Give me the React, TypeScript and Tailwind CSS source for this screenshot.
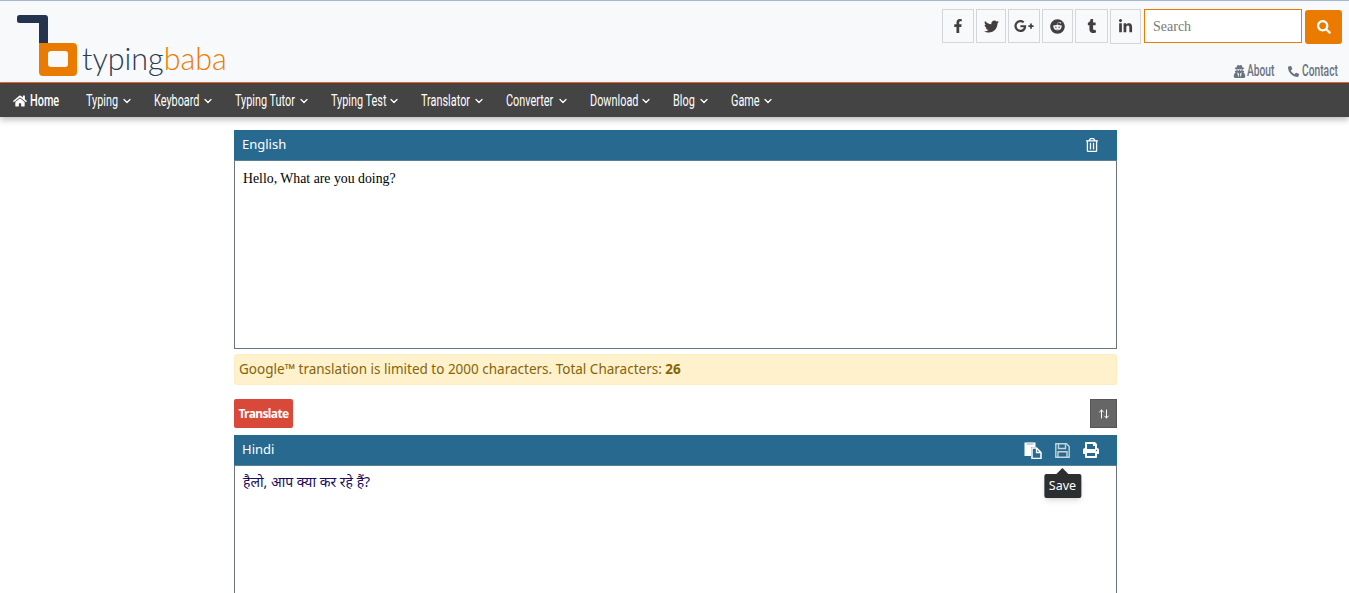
import { ArrowUpDown, ChevronDown } from 'lucide-react';
import {
  FaFacebookF,
  FaTwitter,
  FaGooglePlusG,
  FaReddit,
  FaTumblr,
  FaLinkedinIn,
  FaSearch,
  FaHome,
  FaUserSecret,
  FaPhone,
  FaRegTrashAlt,
  FaPrint,
} from 'react-icons/fa';

const socials = [
  { id: 'fb', icon: <FaFacebookF size={14} />, w: 'w-[32px]' },
  { id: 'tw', icon: <FaTwitter size={15} />, w: 'w-[30px]' },
  { id: 'gp', icon: <FaGooglePlusG size={20} />, w: 'w-[32px]' },
  { id: 'rd', icon: <FaReddit size={15} />, w: 'w-[31px]' },
  { id: 'tb', icon: <FaTumblr size={14} />, w: 'w-[33px]' },
  { id: 'in', icon: <FaLinkedinIn size={15} />, w: 'w-[31px]' },
];

const menu = [
  { label: 'Typing', w: 'w-[32px]' },
  { label: 'Keyboard', w: 'w-[45px]' },
  { label: 'Typing Tutor', w: 'w-[60px]' },
  { label: 'Typing Test', w: 'w-[54px]' },
  { label: 'Translator', w: 'w-[49px]' },
  { label: 'Converter', w: 'w-[48px]' },
  { label: 'Download', w: 'w-[47px]' },
  { label: 'Blog', w: 'w-[22px]' },
  { label: 'Game', w: 'w-[28px]' },
];

function Logo() {
  return (
    <div className="flex items-end">
      <svg width="63" height="62" viewBox="0 0 63 62" className="shrink-0">
        <path d="M1 2.500 Q1 0 3.500 0 H29 Q32 0 32 3 V30 H23 V8 H3.500 Q1 8 1 5.500 Z" fill="#24344f" />
        <path
          fillRule="evenodd"
          d="M23 28 H57 Q61 28 61 32 V57 Q61 61 57 61 H27 Q23 61 23 57 Z M35 36 Q32 36 32 39 V49 Q32 52 35 52 H49 Q52 52 52 49 V39 Q52 36 49 36 Z"
          fill="#ea7b00"
        />
      </svg>
      <div className="font-['Lato',sans-serif] text-[30.500px] leading-[36px] font-light ml-[3px] mb-[1px] whitespace-nowrap">
        <span className="text-[#2b3b55]">typing</span>
        <span className="text-[#ea7b00]">baba</span>
      </div>
    </div>
  );
}

function FilesIcon() {
  return (
    <svg width="18" height="17" viewBox="0 0 18 17">
      <path d="M0.500 0.500 H11.500 V5 H7 V14 H0.500 Z" fill="#ffffff" />
      <path d="M2.500 0.500 H9.500 V3 H2.500 Z" fill="#c9d6de" />
      <path d="M8 6 H12.500 L17 10.500 V16.500 H8 Z" fill="#286a8f" stroke="#ffffff" strokeWidth="1.500" />
      <path d="M12.500 6 V10.500 H17" fill="none" stroke="#ffffff" strokeWidth="1.300" />
    </svg>
  );
}

function FloppyIcon() {
  return (
    <svg width="15" height="15" viewBox="0 0 15 15" fill="none" stroke="#c5d3dc" strokeWidth="1.400">
      <path d="M0.800 0.800 H11.500 L14.200 3.500 V14.200 H0.800 Z" />
      <path d="M3.500 1 V5.500 H10.500 V1" />
      <path d="M3 14 V8.800 H12 V14" />
    </svg>
  );
}

function PanelHeader({ title, children }: { title: string; children?: React.ReactNode }) {
  return (
    <div className="h-[31px] bg-[#286a8f] border-b border-[#5b7f95] flex items-center justify-between pl-2 pr-[18px] text-white font-['Noto_Sans',sans-serif] text-[13px]">
      <span>{title}</span>
      <div className="flex items-center gap-[13px] relative">{children}</div>
    </div>
  );
}

export default function App() {
  return (
    <div className="h-[593px] overflow-hidden bg-white font-['Noto_Sans',sans-serif]">
      {/* Top header */}
      <header className="h-[83px] bg-[#f8f9fb] border-t border-[#a6b4d0] border-b border-b-[#f4642a] flex justify-between">
        <div className="pl-[16px] pt-[14px]">
          <Logo />
        </div>
        <div className="pr-[7px] pt-[8px] flex flex-col items-end">
          <div className="flex items-start">
            <div className="flex gap-[2px]">
              {socials.map((s) => (
                <a
                  key={s.id}
                  className={`${s.w} ${s.id === 'in' ? 'h-[35px]' : 'h-[34px]'} border border-[#d4d6da] flex items-center justify-center text-[#433f3f]`}
                >
                  {s.icon}
                </a>
              ))}
            </div>
            <input
              placeholder="Search"
              readOnly
              className="ml-[3px] w-[158px] h-[34px] bg-white border border-[#ea7b00] px-2 pt-[2px] text-[14px] font-['Liberation_Serif',serif] placeholder:text-[#7a7a7a] outline-none"
            />
            <button className="ml-[3px] mt-px w-[37px] h-[34px] bg-[#ea7b00] rounded-[3px] flex items-center justify-center text-white">
              <FaSearch size={14} />
            </button>
          </div>
          <div className="flex items-center mt-[16px] text-[#6b7280] font-['Roboto',sans-serif] font-medium text-[16px] leading-[22px] pr-[5px]">
            <FaUserSecret size={13} />
            <span className="ml-[1px] w-[27px] whitespace-nowrap inline-block origin-left scale-x-[0.64]">About</span>
            <FaPhone size={11} className="ml-[14px] -scale-x-100" />
            <span className="ml-[3px] w-[35px] whitespace-nowrap inline-block origin-left scale-x-[0.64]">Contact</span>
          </div>
        </div>
      </header>

      {/* Nav bar */}
      <nav className="h-[34px] bg-[#444444] shadow-[0_3px_6px_rgba(0,0,0,0.25)] flex items-center pl-[13px] pt-[2px] text-white font-['Roboto',sans-serif] text-[16px] relative">
        <a className="flex items-center gap-[3px] w-[73px]">
          <FaHome size={14} />
          <span className="whitespace-nowrap inline-block origin-left scale-x-[0.68] font-medium">Home</span>
        </a>
        <div className="flex items-center gap-[21px]">
          {menu.map((m) => (
            <a key={m.label} className="flex items-center gap-[3px] whitespace-nowrap">
              <span className={`${m.w} inline-block origin-left scale-x-[0.68]`}>{m.label}</span>
              <ChevronDown size={12} strokeWidth={2.500} />
            </a>
          ))}
        </div>
      </nav>

      {/* Translator */}
      <main className="w-[883px] ml-[234px] pt-[13px]">
        <PanelHeader title="English">
          <FaRegTrashAlt size={14} />
        </PanelHeader>
        <div className="h-[188px] border border-t-0 border-[#6b7580] px-2 pt-[9px] text-[13.800px] leading-[18px] text-black font-['Liberation_Serif',serif]">
          Hello, What are you doing?
        </div>
        <div className="mt-[5px] h-[31px] bg-[#fff1cc] border border-[#fdecc0] rounded-[3px] px-1 flex items-center text-[13.500px] text-[#85640a]">
          <span>
            Google™ translation is limited to 2000 characters. Total Characters: <b>26</b>
          </span>
        </div>
        <div className="mt-[14px] flex items-center justify-between">
          <button className="h-[29px] w-[59px] bg-[#d9493a] rounded-[2px] text-white text-[12px] font-bold tracking-[-0.6px]">
            Translate
          </button>
          <button className="h-[29px] w-[27px] bg-[#666666] border border-[#555555] flex items-center justify-center text-white">
            <ArrowUpDown size={12} />
          </button>
        </div>
        <div className="mt-[7px]">
          <PanelHeader title="Hindi">
            <FilesIcon />
            <span className="relative">
              <FloppyIcon />
              <div className="absolute top-[31px] left-1/2 -translate-x-1/2 bg-[#2b2f31] text-white text-[12.500px] leading-[24px] px-[5px] rounded-[2px] shadow-md">
                <div className="absolute -top-[6px] left-1/2 -translate-x-1/2 w-0 h-0 border-x-[6px] border-x-transparent border-b-[6px] border-b-[#2b2f31]" />
                Save
              </div>
            </span>
            <FaPrint size={16} />
          </PanelHeader>
          <div className="h-[200px] border border-t-0 border-[#6b7580] px-2 pt-[7px] text-[14px] leading-[18px] text-[#1c0a5c] font-['Noto_Sans',sans-serif]">
            हैलो, आप क्या कर रहे हैं?
          </div>
        </div>
      </main>
    </div>
  );
}
